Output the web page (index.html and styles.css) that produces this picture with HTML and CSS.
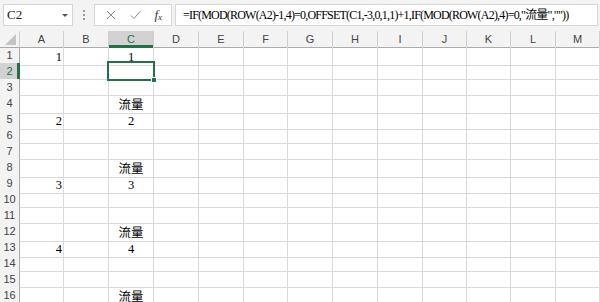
FILE: index.html
```html
<!DOCTYPE html>
<html lang="zh-Hant">
<head>
	<meta charset="UTF-8">
	<title>Book1 - Excel</title>
	<link rel="stylesheet" href="styles.css">
</head>
<body>
	<div class="app">
		<div class="formula-bar">
			<div class="name-box"><span>C2</span><i class="caret"></i></div>
			<div class="grip"><i></i><i></i><i></i></div>
			<div class="fx-buttons">
				<svg class="ico" width="10" height="10" viewBox="0 0 10 10"><path d="M1 1L9 9M9 1L1 9" /></svg>
				<svg class="ico" width="11" height="10" viewBox="0 0 11 10"><path d="M1 5.5L4 8.5L10 1.5" /></svg>
				<span class="fx">f<sub>x</sub></span>
			</div>
			<div class="formula">=IF(MOD(ROW(A2)-1,4)=0,OFFSET(C1,-3,0,1,1)+1,IF(MOD(ROW(A2),4)=0,"流量",""))</div>
		</div>

		<div class="sheet">
			<div class="row head"><div class="corner"></div><div>A</div><div>B</div><div class="on">C</div><div>D</div><div>E</div><div>F</div><div>G</div><div>H</div><div>I</div><div>J</div><div>K</div><div>L</div><div>M</div></div>
			<div class="row"><div class="rh">1</div><div class="r">1</div><div></div><div class="m">1</div><div></div><div></div><div></div><div></div><div></div><div></div><div></div><div></div><div></div><div></div></div>
			<div class="row"><div class="rh on">2</div><div></div><div></div><div class="sel"></div><div></div><div></div><div></div><div></div><div></div><div></div><div></div><div></div><div></div><div></div></div>
			<div class="row"><div class="rh">3</div><div></div><div></div><div></div><div></div><div></div><div></div><div></div><div></div><div></div><div></div><div></div><div></div><div></div></div>
			<div class="row"><div class="rh">4</div><div></div><div></div><div class="m">流量</div><div></div><div></div><div></div><div></div><div></div><div></div><div></div><div></div><div></div><div></div></div>
			<div class="row"><div class="rh">5</div><div class="r">2</div><div></div><div class="m">2</div><div></div><div></div><div></div><div></div><div></div><div></div><div></div><div></div><div></div><div></div></div>
			<div class="row"><div class="rh">6</div><div></div><div></div><div></div><div></div><div></div><div></div><div></div><div></div><div></div><div></div><div></div><div></div><div></div></div>
			<div class="row"><div class="rh">7</div><div></div><div></div><div></div><div></div><div></div><div></div><div></div><div></div><div></div><div></div><div></div><div></div><div></div></div>
			<div class="row"><div class="rh">8</div><div></div><div></div><div class="m">流量</div><div></div><div></div><div></div><div></div><div></div><div></div><div></div><div></div><div></div><div></div></div>
			<div class="row"><div class="rh">9</div><div class="r">3</div><div></div><div class="m">3</div><div></div><div></div><div></div><div></div><div></div><div></div><div></div><div></div><div></div><div></div></div>
			<div class="row"><div class="rh">10</div><div></div><div></div><div></div><div></div><div></div><div></div><div></div><div></div><div></div><div></div><div></div><div></div><div></div></div>
			<div class="row"><div class="rh">11</div><div></div><div></div><div></div><div></div><div></div><div></div><div></div><div></div><div></div><div></div><div></div><div></div><div></div></div>
			<div class="row"><div class="rh">12</div><div></div><div></div><div class="m">流量</div><div></div><div></div><div></div><div></div><div></div><div></div><div></div><div></div><div></div><div></div></div>
			<div class="row"><div class="rh">13</div><div class="r">4</div><div></div><div class="m">4</div><div></div><div></div><div></div><div></div><div></div><div></div><div></div><div></div><div></div><div></div></div>
			<div class="row"><div class="rh">14</div><div></div><div></div><div></div><div></div><div></div><div></div><div></div><div></div><div></div><div></div><div></div><div></div><div></div></div>
			<div class="row"><div class="rh">15</div><div></div><div></div><div></div><div></div><div></div><div></div><div></div><div></div><div></div><div></div><div></div><div></div><div></div></div>
			<div class="row"><div class="rh">16</div><div></div><div></div><div class="m">流量</div><div></div><div></div><div></div><div></div><div></div><div></div><div></div><div></div><div></div><div></div></div>
		</div>
	</div>
</body>
</html>
```

FILE: styles.css
```css
body {
	margin: 0;
	background: #fff;
	font-family: "Liberation Serif", "Noto Sans CJK TC", serif;
	color: #000;
}

.app {width: 600px; height: 302px; overflow: hidden;}

/* formula bar */
.formula-bar {
	display: flex;
	height: 22px;
	padding: 4px 2px 5px 3px;
	background: #f3f3f3;
}
.name-box {
	display: flex;
	align-items: center;
	justify-content: space-between;
	width: 70px;
	box-sizing: border-box;
	padding: 0 4px 0 3px;
	background: #fff;
	border: 1px solid #d6d6d6;
	font-size: 13px;
	color: #222;
}
.caret {border: 3px solid transparent; border-top: 3px solid #555; border-bottom: 0; margin-top: 1px;}
.grip {
	display: flex;
	flex-direction: column;
	align-items: center;
	justify-content: center;
	gap: 2px;
	width: 21px;
}
.grip i {width: 2px; height: 2px; background: #9a9a9a;}
.fx-buttons {
	display: flex;
	align-items: center;
	justify-content: space-around;
	width: 78px;
	box-sizing: border-box;
	padding: 0 2px 0 4px;
	background: #fff;
	border: 1px solid #d6d6d6;
}
.ico path {fill: none; stroke: #8a8a8a; stroke-width: 1;}
.fx {font-style: italic; font-size: 13px; color: #333;}
.fx sub {font-size: 9px; vertical-align: 0; position: relative; top: 1px;}
.formula {
	flex: 1;
	margin-left: 3px;
	padding-left: 7px;
	background: #fff;
	border: 1px solid #d6d6d6;
	font-size: 12px;
	letter-spacing: -0.8px;
	line-height: 20px;
	white-space: nowrap;
	overflow: hidden;
}

/* sheet grid */
.row {
	display: grid;
	grid-template-columns: 20px 44px 45px 45px 45px 45px 44px 45px 45px 45px 44px 44px 45px 44px;
	height: 16px;
}
.row > div {
	box-sizing: border-box;
	border-right: 1px solid #dadada;
	border-bottom: 1px solid #dadada;
	font-size: 12.5px;
	line-height: 16px;
	padding: 2px 3px 0;
	white-space: nowrap;
}
.row > .r {text-align: right; padding-right: 1px;}
.row > .m {text-align: center;}

.head > div, .row > .rh {
	background: #f3f3f3;
	border-color: #cfcfcf;
	font-family: "Liberation Sans", sans-serif;
	font-size: 11px;
	line-height: 16px;
	color: #444;
	text-align: center;
	padding: 0;
}
.head > div {border-bottom-color: #ababab;}
.row > .rh {border-right-color: #ababab;}
.head > .on {background: #d2d2d2; color: #217346; box-shadow: inset 0 -2px #217346; border-bottom-color: #217346;}
.row > .rh.on {background: #d2d2d2; color: #217346; box-shadow: inset -2px 0 #217346; border-right-color: #217346;}

.head > .corner {position: relative;}
.corner::after {
	content: "";
	position: absolute;
	right: 3px;
	bottom: 2px;
	border-left: 11px solid transparent;
	border-bottom: 11px solid #c4c4c4;
}

.sel {position: relative;}
.sel::after {
	content: "";
	position: absolute;
	top: -2px;
	left: -2px;
	right: -2px;
	bottom: -2px;
	border: 2px solid #217346;
}
.sel::before {
	content: "";
	position: absolute;
	right: -4px;
	bottom: -4px;
	width: 4px;
	height: 4px;
	background: #217346;
	border: 1px solid #fff;
	z-index: 1;
}
```
